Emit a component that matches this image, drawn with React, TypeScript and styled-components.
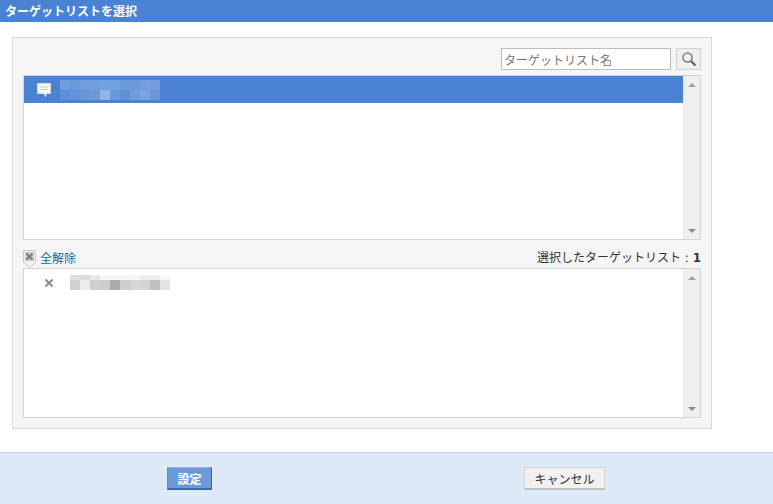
import React from "react";
import styled, { createGlobalStyle } from "styled-components";

const Global = createGlobalStyle`
  html, body { margin: 0; padding: 0; background: #fff; }
  body { font-family: "Noto Sans CJK JP", "Liberation Sans", sans-serif; font-size: 12px; color: #333; }
  * { box-sizing: border-box; }
`;

const Page = styled.div`
  width: 773px;
  height: 504px;
  display: flex;
  flex-direction: column;
  overflow: hidden;
`;
const TitleBar = styled.div`
  height: 22px;
  background: #4a82d4;
  color: #fff;
  font-weight: 700;
  font-size: 12px;
  line-height: 21px;
  padding-left: 5px;
  white-space: nowrap;
`;
const Main = styled.div`
  flex: 1;
  padding: 15px 0 0 12px;
`;
const Panel = styled.section`
  width: 700px;
  height: 392px;
  background: #f5f5f5;
  border: 1px solid #d9d9d9;
  padding: 10px;
  display: flex;
  flex-direction: column;
`;
const SearchRow = styled.div`
  height: 22px;
  display: flex;
  justify-content: flex-end;
  gap: 5px;
  margin-bottom: 5px;
`;
const SearchInput = styled.input`
  width: 170px;
  height: 22px;
  border: 1px solid #bdbdbd;
  background: #fff;
  padding: 0 2px;
  font: 12px "Noto Sans CJK JP", "Liberation Sans", sans-serif;
  outline: none;
  &::placeholder { color: #757575; opacity: 1; }
`;
const SearchButton = styled.button`
  width: 25px;
  height: 22px;
  padding: 0;
  border: 1px solid #d2d2d2;
  background: #efefef;
  display: flex;
  align-items: center;
  justify-content: center;
`;
const ListBox = styled.div<{ $height: number }>`
  height: ${(p) => p.$height}px;
  flex: none;
  border: 1px solid #d4d4d4;
  background: #fff;
  display: flex;
`;
const ListBody = styled.div`
  flex: 1;
  min-width: 0;
`;
const TargetRow = styled.div`
  height: 27px;
  background: #4a82d4;
  display: flex;
  align-items: center;
  padding-left: 13px;
  gap: 9px;
`;
const SelectedRow = styled.div`
  height: 27px;
  display: flex;
  align-items: center;
  padding: 0 0 0 20px;
  gap: 16px;
`;
const Scrollbar = styled.div`
  width: 17px;
  flex: none;
  background: #efefef;
  border-left: 1px solid #e9e9e9;
  display: flex;
  flex-direction: column;
  justify-content: space-between;
  align-items: center;
  padding: 7px 0 6px;
`;
const ArrowUp = styled.span`
  width: 0;
  height: 0;
  border-left: 4px solid transparent;
  border-right: 4px solid transparent;
  border-bottom: 4px solid #a0a0a0;
`;
const ArrowDown = styled.span`
  width: 0;
  height: 0;
  border-left: 4px solid transparent;
  border-right: 4px solid transparent;
  border-top: 4px solid #8a8a8a;
`;
const Mosaic = styled.div<{ $rows: string }>`
  display: grid;
  grid-template-columns: repeat(10, 10px);
  grid-template-rows: ${(p) => p.$rows};
`;
const Cell = styled.span`
  display: block;
`;
const StatusRow = styled.div`
  height: 28px;
  flex: none;
  display: flex;
  align-items: flex-end;
  justify-content: space-between;
  line-height: 20px;
`;
const ClearAll = styled.a`
  display: flex;
  align-items: flex-end;
  gap: 4px;
  color: #0b6aa8;
  font-size: 12px;
  line-height: 20px;
  cursor: pointer;
`;
const Count = styled.div`
  font-size: 12px;
  color: #333;
  white-space: pre;
`;
const CountSeparator = styled.span`
  font-family: "DejaVu Sans", sans-serif;
`;
const CountValue = styled.b`
  font-family: "DejaVu Sans", sans-serif;
  font-weight: 700;
`;
const Footer = styled.footer`
  height: 52px;
  flex: none;
  background: #dee9f7;
  border-top: 1px solid #b9d3f2;
  display: flex;
  align-items: flex-start;
  padding: 14px 0 0 167px;
  gap: 312px;
`;
const PrimaryButton = styled.button`
  width: 45px;
  height: 23px;
  padding: 0;
  background: #6c9ad9;
  border: 1px solid #5d8ccf;
  border-top-color: #8fb2e4;
  border-bottom: 2px solid #3c68a8;
  border-right-color: #3c68a8;
  color: #fff;
  font: 700 12px "Noto Sans CJK JP", sans-serif;
`;
const SecondaryButton = styled.button`
  width: 81px;
  height: 23px;
  padding: 0;
  background: #f1f1f1;
  border: 1px solid #d5d5d5;
  border-bottom: 2px solid #c0c0c0;
  color: #333;
  font: 12px "Noto Sans CJK JP", sans-serif;
`;

const blueCells = [
  "#6f9ddd", "#6b9adb", "#6e9cdc", "#6f9ddd", "#72a1e0", "#72a1e0", "#6b9adb", "#6c9bdc", "#749fdc", "#729ddb",
  "#5d90d8", "#6394da", "#6597d9", "#6a9ad9", "#92b5e4", "#6899da", "#5f92d9", "#6d9cdb", "#7ba4de", "#6a98d7",
];
const greyCells = [
  "#e0e0de", "#dcdcda", "#e5e8ec", "#f6f6f7", "#f5f5f6", "#f5f5f3", "#f7f7f5", "#eeeeef", "#eeeeee", "#f7f8fa",
  "#d0d0ce", "#ebebe9", "#cfcfcd", "#cdcdcb", "#a9abb0", "#cfcfcf", "#d8d5d2", "#d2d5d8", "#c5bfbd", "#dfe4ec",
];

const Pixels = ({ colors, rows }: { colors: string[]; rows: string }) => (
  <Mosaic $rows={rows}>
    {colors.map((c, i) => (
      <Cell key={i} style={{ background: c }} />
    ))}
  </Mosaic>
);

const BubbleIcon = () => (
  <svg width="14" height="14" viewBox="0 0 14 14" style={{ flex: "none" }}>
    <path d="M.5 .5h13v10H9.5l-1 3-1.5-3H.5z" fill="#f6f6f4" stroke="#d3d8e0" />
    <path d="M3 4h8M3 6.5h8" stroke="#d0d0d0" />
  </svg>
);
const SearchIcon = () => (
  <svg width="16" height="16" viewBox="0 0 16 16">
    <circle cx="6.5" cy="6.5" r="4.5" fill="none" stroke="#7f7f7f" strokeWidth="1.6" />
    <path d="M10 10l4.5 4.5" stroke="#666" strokeWidth="2.4" />
  </svg>
);
const ClearIcon = () => (
  <svg width="13" height="18" viewBox="0 0 13 18" style={{ flex: "none" }}>
    <path d="M.5.5h12v12l-6 5-6-5z" fill="#f0f0f0" stroke="#c8c8c8" />
    <path d="M2 2h9v9H2z" fill="#c9c9c9" />
    <path d="M3.5 3.5l6 6M9.5 3.5l-6 6" stroke="#7a7a7a" strokeWidth="1.8" />
  </svg>
);
const RemoveIcon = () => (
  <svg width="10" height="10" viewBox="0 0 10 10" style={{ flex: "none" }}>
    <path d="M1.5 1.5l7 7M8.5 1.5l-7 7" stroke="#8a8a8a" strokeWidth="2" />
  </svg>
);

export default function App() {
  return (
    <Page>
      <Global />
      <TitleBar>ターゲットリストを選択</TitleBar>
      <Main>
        <Panel>
          <SearchRow>
            <SearchInput placeholder="ターゲットリスト名" />
            <SearchButton aria-label="検索">
              <SearchIcon />
            </SearchButton>
          </SearchRow>
          <ListBox $height={165}>
            <ListBody>
              <TargetRow>
                <BubbleIcon />
                <Pixels colors={blueCells} rows="10px 10px" />
              </TargetRow>
            </ListBody>
            <Scrollbar>
              <ArrowUp />
              <ArrowDown />
            </Scrollbar>
          </ListBox>
          <StatusRow>
            <ClearAll>
              <ClearIcon />
              全解除
            </ClearAll>
            <Count>
              選択したターゲットリスト
              <CountSeparator> : </CountSeparator>
              <CountValue>1</CountValue>
            </Count>
          </StatusRow>
          <ListBox $height={150}>
            <ListBody>
              <SelectedRow>
                <RemoveIcon />
                <Pixels colors={greyCells} rows="5px 10px" />
              </SelectedRow>
            </ListBody>
            <Scrollbar>
              <ArrowUp />
              <ArrowDown />
            </Scrollbar>
          </ListBox>
        </Panel>
      </Main>
      <Footer>
        <PrimaryButton>設定</PrimaryButton>
        <SecondaryButton>キャンセル</SecondaryButton>
      </Footer>
    </Page>
  );
}
